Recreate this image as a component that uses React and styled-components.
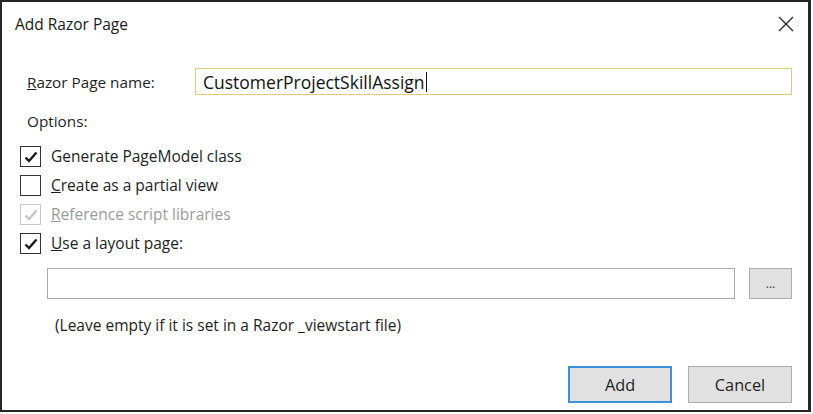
import styled, { createGlobalStyle } from "styled-components";

const GlobalStyle = createGlobalStyle`
  html, body {
    margin: 0;
    padding: 0;
    background: #ffffff;
  }
  body {
    font-family: 'Open Sans', 'Noto Sans', sans-serif;
    color: #1e1e1e;
  }
`;

const options = [
  { key: "G", rest: "enerate PageModel class", checked: true, underline: false },
  { key: "C", rest: "reate as a partial view", checked: false, underline: true },
  { key: "R", rest: "eference script libraries", checked: true, underline: true, disabled: true },
  { key: "U", rest: "se a layout page:", checked: true, underline: true },
];

const Check = ({ disabled }) => (
  <svg width="14" height="12" viewBox="0 0 14 12">
    <path
      d="M1.5 6.5 L5 10 L12.5 1.5"
      fill="none"
      stroke={disabled ? "#c4c4c4" : "#1a1a1a"}
      strokeWidth="2.4"
    />
  </svg>
);

const CloseIcon = () => (
  <svg width="16" height="16" viewBox="0 0 16 16">
    <path d="M1 1 L15 15 M15 1 L1 15" stroke="#2a2a2a" strokeWidth="1.4" fill="none" />
  </svg>
);

const App = () => {
  return (
    <>
      <GlobalStyle />
      <Dialog>
        <Header>
          <Title>Add Razor Page</Title>
          <CloseButton><CloseIcon /></CloseButton>
        </Header>

        <NameRow>
          <Label><u>R</u>azor Page name:</Label>
          <NameInput>
            CustomerProjectSkillAssign<Caret />
          </NameInput>
        </NameRow>

        <OptionsTitle>Options:</OptionsTitle>

        <OptionList>
          {options.map((o) => (
            <OptionRow key={o.rest} $disabled={o.disabled}>
              <Box $disabled={o.disabled}>{o.checked && <Check disabled={o.disabled} />}</Box>
              <span>{o.underline ? <u>{o.key}</u> : o.key}{o.rest}</span>
            </OptionRow>
          ))}
        </OptionList>

        <LayoutRow>
          <LayoutInput />
          <BrowseButton>...</BrowseButton>
        </LayoutRow>

        <Hint>(Leave empty if it is set in a Razor _viewstart file)</Hint>

        <Footer>
          <DialogButton $primary>Add</DialogButton>
          <DialogButton>Cancel</DialogButton>
        </Footer>
      </Dialog>
    </>
  );
};

export default App;

const Dialog = styled.div`
  box-sizing: border-box;
  width: 811px;
  height: 412px;
  border: 2px solid #262626;
  border-right-width: 3px;
  display: flex;
  flex-direction: column;
  background: #ffffff;
`;

const Header = styled.div`
  display: flex;
  align-items: center;
  justify-content: space-between;
  padding: 11px 14px 0 13px;
  height: 22px;
`;

const Title = styled.div`
  font-size: 15.5px;
  line-height: 20px;
  color: #1a1a1a;
`;

const CloseButton = styled.div`
  width: 16px;
  height: 16px;
  display: flex;
`;

const NameRow = styled.div`
  display: flex;
  align-items: center;
  margin-top: 33px;
  padding: 0 16px 0 25px;
`;

const Label = styled.div`
  width: 168px;
  font-size: 15.3px;
  line-height: 20px;
`;

const NameInput = styled.div`
  flex: 1;
  box-sizing: border-box;
  height: 27px;
  border: 1px solid #e6ca7a;
  padding: 0 7px;
  display: flex;
  align-items: center;
  font-size: 17.5px;
  color: #111;
`;

const Caret = styled.span`
  display: inline-block;
  width: 1px;
  height: 20px;
  background: #111;
  margin-left: 1px;
`;

const OptionsTitle = styled.div`
  margin-top: 16px;
  padding-left: 25px;
  font-size: 15.3px;
  line-height: 20px;
`;

const OptionList = styled.div`
  display: flex;
  flex-direction: column;
  gap: 8px;
  margin-top: 15px;
  padding-left: 18px;
`;

const OptionRow = styled.div`
  display: flex;
  align-items: center;
  gap: 10px;
  font-size: 15.5px;
  line-height: 21px;
  color: ${(p) => (p.$disabled ? "#9b9b9b" : "#1e1e1e")};
`;

const Box = styled.div`
  box-sizing: border-box;
  width: 21px;
  height: 21px;
  border: 1px solid ${(p) => (p.$disabled ? "#c8c8c8" : "#333333")};
  display: flex;
  align-items: center;
  justify-content: center;
  background: #fff;
`;

const LayoutRow = styled.div`
  display: flex;
  gap: 14px;
  margin-top: 14px;
  padding: 0 16px 0 45px;
`;

const LayoutInput = styled.div`
  flex: 1;
  box-sizing: border-box;
  height: 31px;
  border: 1px solid #a9a9a9;
  background: #fff;
`;

const BrowseButton = styled.div`
  box-sizing: border-box;
  width: 43px;
  height: 31px;
  border: 1px solid #adadad;
  background: #e1e1e1;
  display: flex;
  align-items: center;
  justify-content: center;
  font-size: 12px;
  color: #333;
`;

const Hint = styled.div`
  margin-top: 16px;
  padding-left: 53px;
  font-size: 15.5px;
  line-height: 20px;
`;

const Footer = styled.div`
  display: flex;
  justify-content: flex-end;
  gap: 16px;
  margin-top: 31px;
  padding-right: 16px;
`;

const DialogButton = styled.div`
  box-sizing: border-box;
  width: 104px;
  height: 37px;
  border: ${(p) => (p.$primary ? "2px solid #3c8fdb" : "1px solid #adadad")};
  background: #e1e1e1;
  display: flex;
  align-items: center;
  justify-content: center;
  font-size: 16.3px;
  color: #1e1e1e;
`;
